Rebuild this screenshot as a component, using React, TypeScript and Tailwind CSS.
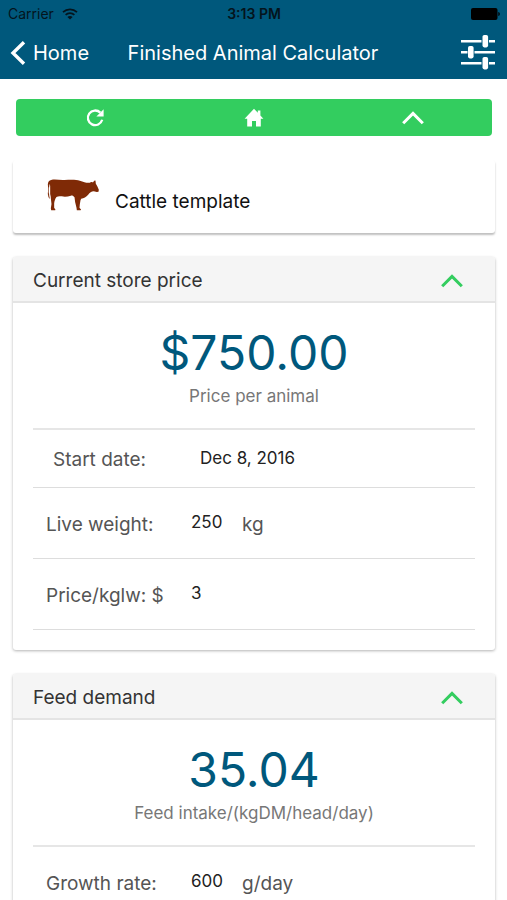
import { useState, type ReactNode } from "react";

function WifiIcon() {
  return (
    <svg viewBox="0 0 16 12" className="h-3 w-4" fill="none" stroke="#04141d" strokeWidth="1.7" aria-hidden="true">
      <path d="M1 4.2C5 .4 11 .4 15 4.2" />
      <path d="M3.6 6.8c2.5-2.3 6.3-2.3 8.800 0" />
      <path d="M8 11.4 5.400 8.900c1.500-1.300 3.700-1.300 5.200 0z" fill="#04141d" stroke="none" />
    </svg>
  );
}

function BatteryIcon() {
  return (
    <svg viewBox="0 0 30 12" className="h-3 w-[30px]" fill="#000" aria-hidden="true">
      <rect x="1" width="26.500" height="12" rx="2" />
      <path d="M28.300 4c1.100.4 1.500 1.100 1.500 2s-.4 1.600-1.500 2z" />
    </svg>
  );
}

function BackIcon() {
  return (
    <svg viewBox="0 0 16 24" className="h-6 w-4" fill="none" stroke="currentColor" strokeWidth="3.400" aria-hidden="true">
      <path d="M14 1.200 3 12l11 10.800" />
    </svg>
  );
}

function SlidersIcon() {
  return (
    <svg viewBox="0 0 36 36" className="size-9" fill="currentColor" aria-hidden="true">
      <path d="M1 6h20.500v2.400H1zM29 6h6v2.400h-6zM1 17h6.500v2.400H1zM14.500 17H35v2.400H14.500zM1 28h20.500v2.400H1zM29 28h6v2.400h-6z" />
      <rect x="22.500" y="1" width="5.600" height="12.400" rx="1.800" />
      <rect x="8" y="12" width="5.600" height="12.400" rx="1.800" />
      <rect x="22.500" y="23" width="5.600" height="12.400" rx="1.800" />
    </svg>
  );
}

function RefreshIcon() {
  return (
    <svg viewBox="0 0 20 20" className="size-5" aria-hidden="true">
      <path d="M15.300 4.600A7.300 7.300 0 1 0 17.200 11.800" fill="none" stroke="currentColor" strokeWidth="2.300" />
      <path d="M18.600 1.200v7.200h-7.200z" fill="currentColor" />
    </svg>
  );
}

function HomeIcon() {
  return (
    <svg viewBox="0 0 20 20" className="size-5" fill="currentColor" aria-hidden="true">
      <path d="M10 .8.6 10.800h2.600v7.800h4.800v-5.600h4v5.600h4.800v-7.800h2.600l-3-3.200V2.600h-2.600v2.200z" />
    </svg>
  );
}

function ChevronUpIcon() {
  return (
    <svg viewBox="0 0 22 14" className="h-3.5 w-[22px]" fill="none" stroke="currentColor" strokeWidth="3" aria-hidden="true">
      <path d="M1.200 12.200 11 2.400l9.800 9.800" />
    </svg>
  );
}

function CowIcon() {
  return (
    <svg viewBox="22 25 158 99" className="h-[33px] w-[53px]" fill="#7f2a06" aria-hidden="true">
      <path d="M34 31C46 28 60 32 74 31C90 30 108 29 120 33C132 37 142 41 150 39C153 37 154 36 157 38L160 38C162 34 165 32 167 33L168 42L172 49L177 60L176 66L171 67L162 65C154 65 150 70 145 75C139 82 132 85 124 87L122 92L120 104L119 114L124 120L122 122H111L110 114L106 98L104 83C100 78 97 77 93 78C84 81 74 82 66 80C60 79 54 79 50 82C46 87 44 94 43 101L43 114L47 120L46 122H34L33 116L35 103L33 86L31 72L31 50L30 42C27 50 28 60 27 68L29 78L30 88L26 83L24 73L25 56L24 44C25 36 28 32 34 31Z" />
      <path d="M28.500 52c-2 10-.5 20 2.500 32" fill="none" stroke="#fff" strokeOpacity=".75" strokeWidth="2.500" />
    </svg>
  );
}

interface CardProps {
  title: string;
  value: string;
  caption: string;
  children: ReactNode;
}

function ResultCard({ title, value, caption, children }: CardProps) {
  const [open, setOpen] = useState(true);
  return (
    <section className="mt-6 rounded-[3px] bg-white pb-5 shadow-[0_1px_3px_rgba(0,0,0,0.3)]">
      <header className="flex h-[46px] items-center justify-between rounded-t-[3px] border-b-2 border-[#e4e4e4] bg-[#f5f5f5] pt-1 pr-8 pl-5">
        <h2 className="text-[19px] text-[#333]">{title}</h2>
        <button
          type="button"
          aria-label={`Toggle ${title}`}
          aria-expanded={open}
          onClick={() => setOpen(!open)}
          className="text-[#33cd5f]"
        >
          <ChevronUpIcon />
        </button>
      </header>
      {open && (
        <div className="mx-5">
          <div className="border-b-2 border-[#e6e6e6] pt-5 pb-[19px] text-center">
            <p className="text-5xl leading-[60px] text-[#00587c]">{value}</p>
            <p className="text-[17px] leading-[26px] text-[#777]">{caption}</p>
          </div>
          {children}
        </div>
      )}
    </section>
  );
}

interface FieldProps {
  id: string;
  label: string;
  initial: string;
  unit?: string;
}

function NumberField({ id, label, initial, unit }: FieldProps) {
  return (
    <div className="flex h-[71px] items-center border-b border-[#ddd] pt-1 pl-[13px]">
      <label htmlFor={id} className="w-[145px] text-[19px] text-[#555]">
        {label}
      </label>
      <input
        id={id}
        inputMode="decimal"
        defaultValue={initial}
        className="w-[51px] bg-transparent pb-1 text-[17px] text-[#222] outline-none"
      />
      {unit && <span className="text-[19px] text-[#555]">{unit}</span>}
    </div>
  );
}

export default function App() {
  return (
    <div className="flex h-screen flex-col bg-white font-['Inter','Liberation_Sans',sans-serif]">
      <header className="shrink-0 bg-[#00587c]">
        <div className="grid h-[27px] grid-cols-[1fr_auto_1fr] items-center pr-[7px] pl-2 text-sm text-[#04141d]">
          <div className="flex items-center gap-2">
            <span>Carrier</span>
            <WifiIcon />
          </div>
          <span className="font-semibold">3:13 PM</span>
          <div className="flex justify-end">
            <BatteryIcon />
          </div>
        </div>
        <nav className="grid h-[52px] grid-cols-[1fr_auto_1fr] items-center pr-[11px] pl-2.5 text-xl text-white">
          <a href="#home" className="flex items-center gap-[7px]">
            <BackIcon />
            Home
          </a>
          <h1>Finished Animal Calculator</h1>
          <button type="button" aria-label="Settings" className="justify-self-end pb-0.5">
            <SlidersIcon />
          </button>
        </nav>
      </header>

      <main className="min-h-0 flex-1 overflow-y-auto pt-5 pr-3 pb-6 pl-[13px] [scrollbar-width:none]">
        <div className="mx-[3px] grid h-[37px] grid-cols-3 rounded bg-[#33cd5f] text-white">
          <button type="button" aria-label="Reset" className="flex items-center justify-center">
            <RefreshIcon />
          </button>
          <button type="button" aria-label="Home" className="flex items-center justify-center">
            <HomeIcon />
          </button>
          <button type="button" aria-label="Collapse all" className="flex items-center justify-center">
            <ChevronUpIcon />
          </button>
        </div>

        <section className="mt-6 flex h-[73px] items-center gap-[15px] rounded-[3px] bg-white pl-[34px] shadow-[0_2px_2px_rgba(0,0,0,0.25)]">
          <div className="pb-1">
            <CowIcon />
          </div>
          <h2 className="pt-3 text-[19px] text-[#111]">Cattle template</h2>
        </section>

        <ResultCard title="Current store price" value="$750.00" caption="Price per animal">
          <div className="flex h-[58px] items-center border-b border-[#ddd] pt-1 pl-5">
            <label htmlFor="start-date" className="w-[147px] text-[19px] text-[#555]">
              Start date:
            </label>
            <input
              id="start-date"
              defaultValue="Dec 8, 2016"
              className="w-[120px] bg-transparent pb-1 text-[17px] text-[#222] outline-none"
            />
          </div>
          <NumberField id="live-weight" label="Live weight:" initial="250" unit="kg" />
          <NumberField id="price-kglw" label="Price/kglw: $" initial="3" />
        </ResultCard>

        <ResultCard title="Feed demand" value="35.04" caption="Feed intake/(kgDM/head/day)">
          <NumberField id="growth-rate" label="Growth rate:" initial="600" unit="g/day" />
        </ResultCard>
      </main>
    </div>
  );
}
